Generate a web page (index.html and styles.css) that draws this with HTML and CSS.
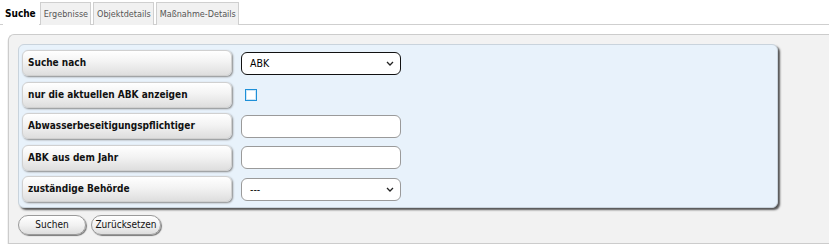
FILE: index.html
```html
<!DOCTYPE html>
<html lang="de">
<head>
<meta charset="utf-8">
<title>Suche</title>
<link rel="stylesheet" href="styles.css">
</head>
<body>
<div class="tabs">
  <div class="tab active">Suche</div>
  <div class="tab">Ergebnisse</div>
  <div class="tab">Objektdetails</div>
  <div class="tab">Maßnahme-Details</div>
</div>
<div class="outer">
  <div class="form">
    <div class="row">
      <div class="label">Suche nach</div>
      <div class="select strong"><span>ABK</span><svg class="chev" width="8" height="5" viewBox="0 0 8 5"><path d="M1 1 L4 4 L7 1" fill="none" stroke="#222" stroke-width="1.3"/></svg></div>
    </div>
    <div class="row">
      <div class="label">nur die aktuellen ABK anzeigen</div>
      <div class="check"></div>
    </div>
    <div class="row">
      <div class="label">Abwasserbeseitigungspflichtiger</div>
      <div class="input"></div>
    </div>
    <div class="row">
      <div class="label">ABK aus dem Jahr</div>
      <div class="input"></div>
    </div>
    <div class="row">
      <div class="label">zuständige Behörde</div>
      <div class="select"><span>---</span><svg class="chev" width="8" height="5" viewBox="0 0 8 5"><path d="M1 1 L4 4 L7 1" fill="none" stroke="#222" stroke-width="1.3"/></svg></div>
    </div>
  </div>
  <div class="buttons">
    <div class="btn btn-search">Suchen</div>
    <div class="btn btn-reset">Zurücksetzen</div>
  </div>
</div>
</body>
</html>
```
FILE: styles.css
```css
html, body {
  margin: 0;
  padding: 0;
  background: #ffffff;
}
body {
  font-family: "DejaVu Sans Condensed", "DejaVu Sans", Verdana, sans-serif;
  font-stretch: condensed;
  font-size: 10px;
  color: #000;
  overflow: hidden;
}
.tabs {
  display: flex;
  padding: 1px 0 0 3px;
  height: 23px;
  border-bottom: 1px solid #cfcfcf;
  box-sizing: content-box;
}
.tab {
  font-size: 9px;
  color: #555;
  background: #f1f1f1;
  border: 1px solid #cfcfcf;
  border-bottom: none;
  padding: 0 2px 0 3px;
  height: 23px;
  line-height: 22px;
  margin-right: 2px;
  box-sizing: border-box;
  margin-top: 1px;
}
.tab.active {
  background: #fff;
  border-color: #fff;
  color: #000;
  font-weight: bold;
  font-size: 10px;
  padding: 0 2px 0 1px;
  margin-right: 1px;
}
.outer {
  margin: 9px 0 0 8px;
  height: 210px;
  box-sizing: border-box;
  background: #f2f2f2;
  border: 1px solid #cccccc;
  border-right: none;
  border-radius: 6px 0 0 0;
  padding: 9px 0 0 9px;
  box-shadow: 0 2px 1px #777;
}
.form {
  width: 760px;
  height: 164px;
  box-sizing: border-box;
  background: #e8f2fb;
  border: 1px solid #c9d3dc;
  border-radius: 6px;
  box-shadow: 2px 2px 2px #555;
  padding: 5px 0 0 3px;
  display: flex;
  flex-direction: column;
  gap: 5.5px;
}
.row {
  display: flex;
  align-items: center;
  gap: 9px;
  height: 26px;
}
.label {
  width: 210px;
  height: 26px;
  box-sizing: border-box;
  border-radius: 6px;
  background: linear-gradient(#ffffff 0%, #f3f3f3 45%, #dedede 100%);
  border: 1px solid #d0d0d0;
  box-shadow: 1px 1px 2px #888;
  font-weight: bold;
  font-size: 10px;
  line-height: 24px;
  padding-left: 5px;
  color: #111;
}
.select, .input {
  width: 160px;
  height: 23px;
  box-sizing: border-box;
  border-radius: 6px;
  background: #fff;
  border: 1px solid #9a9a9a;
  display: flex;
  align-items: center;
  justify-content: space-between;
  padding: 0 6px 0 8px;
  font-size: 10.5px;
}
.select.strong {
  border: 1px solid #111;
}
.chev {
  display: block;
}
.check {
  width: 12px;
  height: 12px;
  box-sizing: border-box;
  border: 1px solid #1e90d8;
  box-shadow: inset 0 0 0 1px #cfe6f7;
  background: #fff;
  margin-left: 4px;
}
.buttons {
  display: flex;
  gap: 5px;
  margin-top: 7px;
}
.btn {
  height: 20px;
  box-sizing: border-box;
  border: 1px solid #9a9a9a;
  border-radius: 10px;
  background: linear-gradient(#ffffff 0%, #f2f2f2 50%, #dddddd 100%);
  box-shadow: 1px 1px 1px #777;
  font-size: 10px;
  line-height: 18px;
  text-align: center;
  color: #111;
}
.btn-search { width: 68px; }
.btn-reset { width: 70px; }
```
